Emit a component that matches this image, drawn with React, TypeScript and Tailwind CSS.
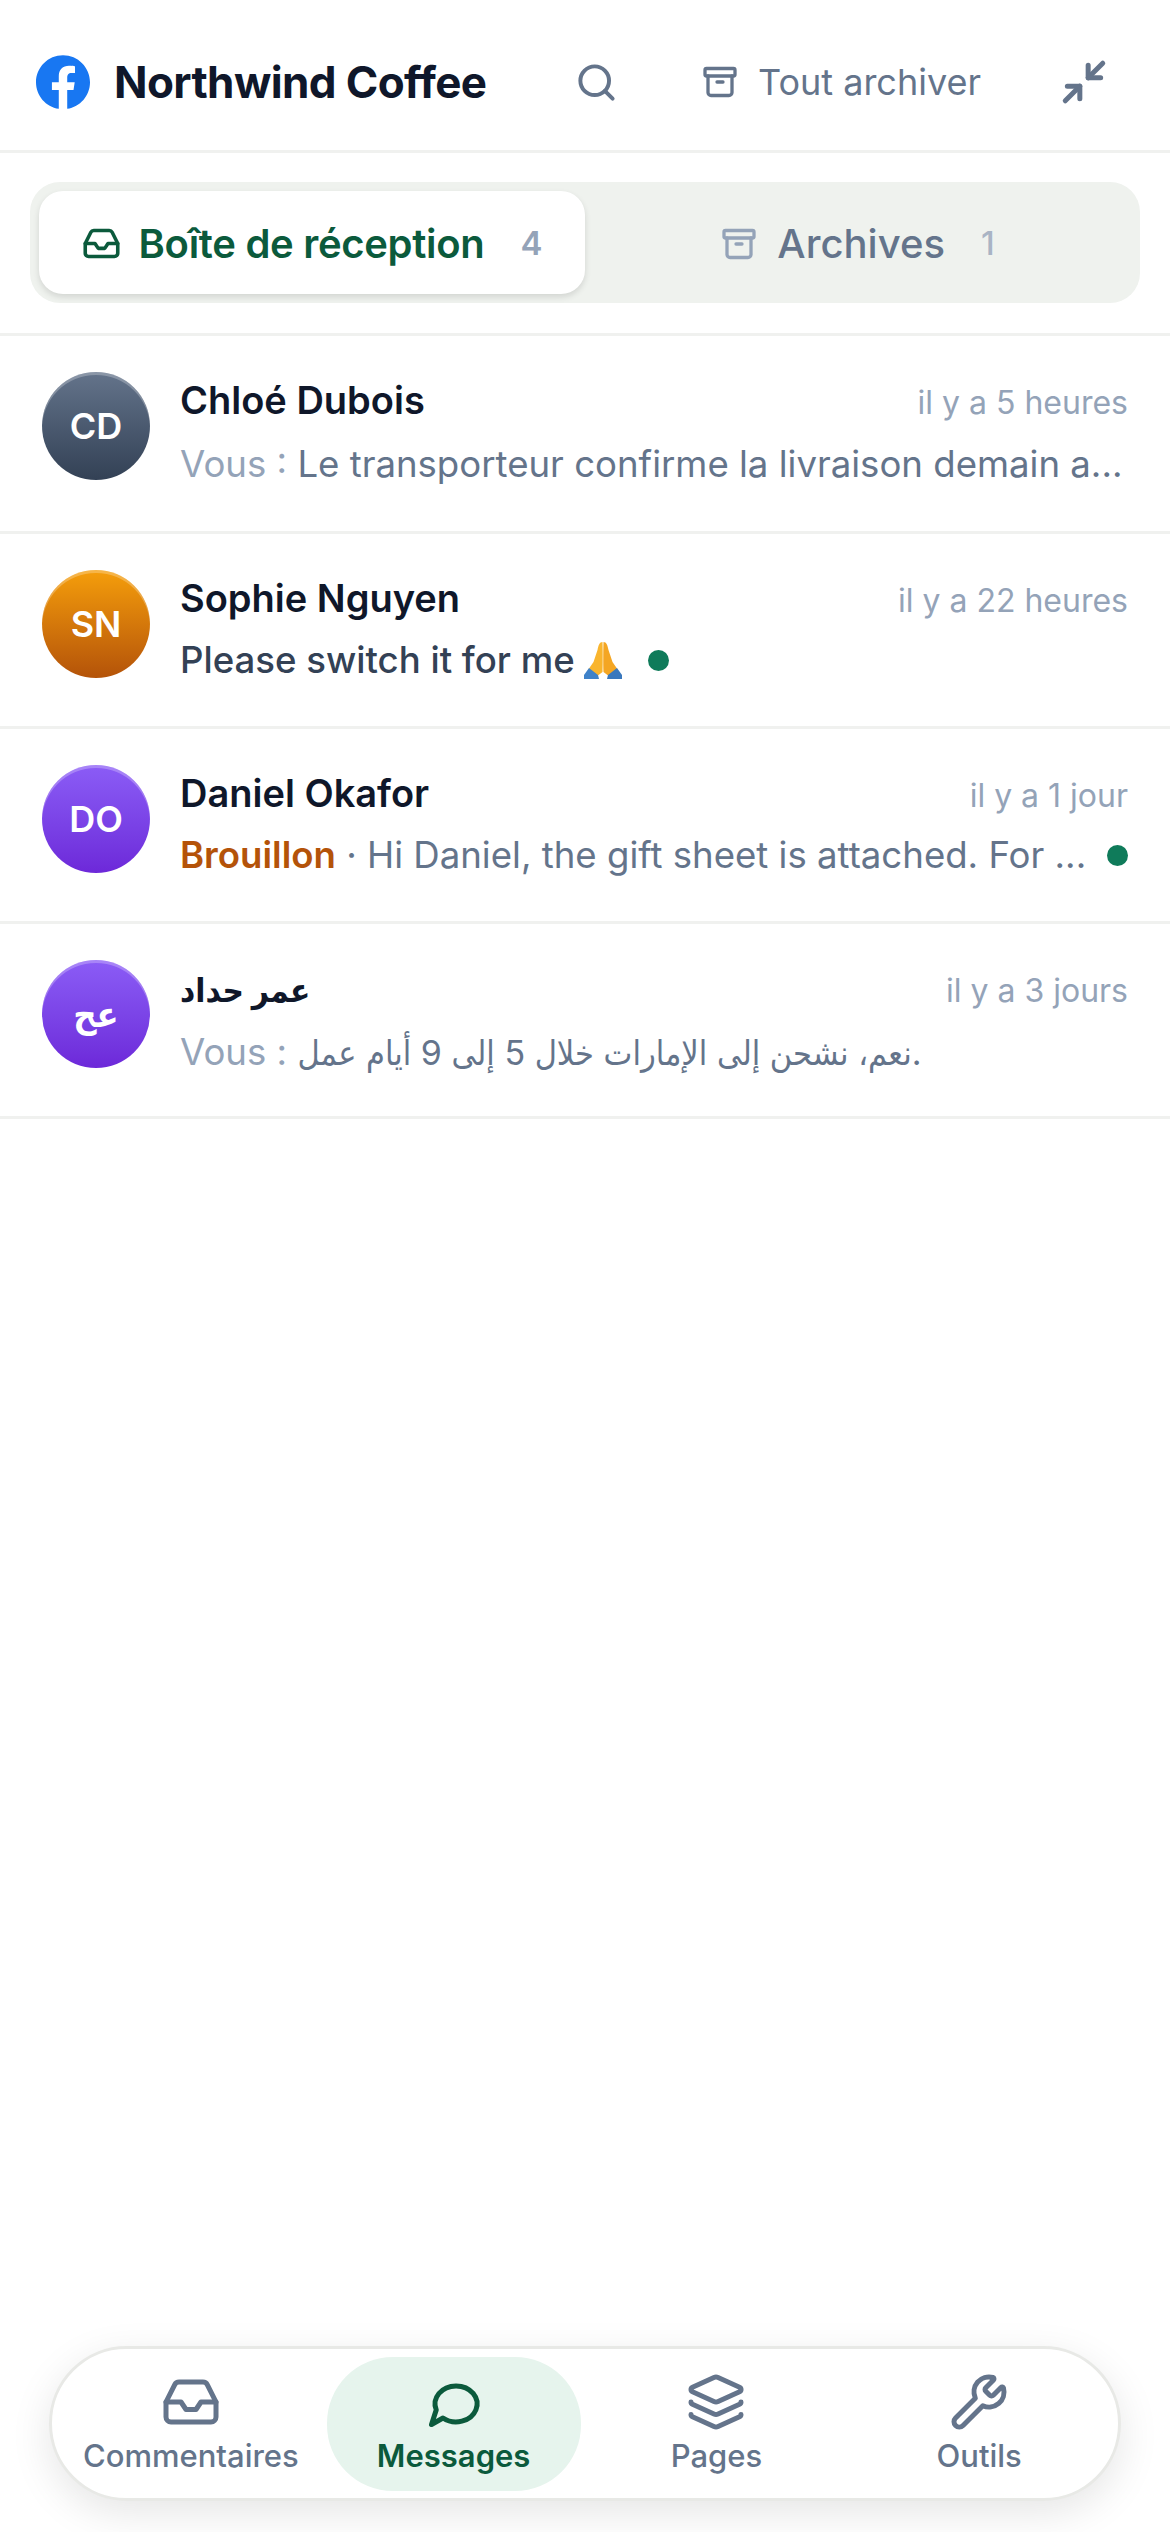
import { Archive, Inbox, Layers, Minimize2, Search, Wrench } from "lucide-react";

const font = "font-['Inter','DejaVu_Sans_Condensed','DejaVu_Sans',sans-serif]";

// Emoji mains jointes, aucune police emoji n'est installée
const PrayIcon = () => (
  <svg viewBox="0 0 38 38" className="ml-[9px] w-[38px] h-[38px] shrink-0">
    <path d="M18.5 1 C15.5 1 14.5 4 13.5 9 L9.5 21 L4 29 L12 36 L18.5 31 C18.8 25 18.8 10 18.5 1Z" fill="#f9b52e" />
    <path d="M19.5 1 C22.5 1 23.5 4 24.5 9 L28.5 21 L34 29 L26 36 L19.5 31 C19.2 25 19.2 10 19.5 1Z" fill="#f4a623" />
    <path d="M0 38 L0 34 L5 27 L14 34 L15 38Z" fill="#3f82c9" />
    <path d="M38 38 L38 34 L33 27 L24 34 L23 38Z" fill="#3a78bd" />
  </svg>
);

const FacebookLogo = () => (
  <svg viewBox="0 0 24 24" className="w-[54px] h-[54px] shrink-0">
    <circle cx="12" cy="12" r="11.5" fill="#ffffff" />
    <path
      fill="#1877f2"
      d="M24 12.073c0-6.627-5.373-12-12-12s-12 5.373-12 12c0 5.99 4.388 10.954 10.125 11.854v-8.385H7.078v-3.47h3.047V9.43c0-3.007 1.792-4.669 4.533-4.669 1.312 0 2.686.235 2.686.235v2.953H15.83c-1.491 0-1.956.925-1.956 1.874v2.25h3.328l-.532 3.47h-2.796v8.385C19.612 23.027 24 18.062 24 12.073z"
    />
  </svg>
);

// Bulle un peu aplatie avec la pointe en bas à gauche
const BubbleIcon = ({ size }: { size: number }) => (
  <svg width={size} height={size} viewBox="0 0 24 24" fill="none" stroke="currentColor" strokeWidth={2} strokeLinecap="round" strokeLinejoin="round">
    <path d="M7.6 18.4A8.4 7.2 0 1 0 4.9 15.15L3 21Z" />
  </svg>
);

const Dot = ({ className }: { className: string }) => (
  <span className={`w-[21px] h-[21px] rounded-full bg-[#0f7b5a] shrink-0 ${className}`} />
);

const conversations = [
  {
    initials: "CD",
    name: "Chloé Dubois",
    nameClass: "text-[38px] font-semibold",
    time: "il y a 5 heures",
    avatar: "from-[#64748b] to-[#334155]",
    previewClass: "mt-[8px]",
    preview: (
      <span className="text-[#64748b]">
        <span className="text-[#94a3b8]">Vous : </span>Le transporteur confirme la livraison demain a...
      </span>
    ),
  },
  {
    initials: "SN",
    name: "Sophie Nguyen",
    nameClass: "text-[38px] font-semibold",
    time: "il y a 22 heures",
    avatar: "from-[#f59e0b] to-[#b45309]",
    previewClass: "mt-[6px]",
    preview: (
      <>
        <span className="font-medium text-[#334155]">Please switch it for me</span>
        <PrayIcon />
        <Dot className="ml-[26px]" />
      </>
    ),
  },
  {
    initials: "DO",
    name: "Daniel Okafor",
    nameClass: "text-[38px] font-semibold",
    time: "il y a 1 jour",
    avatar: "from-[#8b5cf6] to-[#6d28d9]",
    previewClass: "mt-[6px] justify-between",
    preview: (
      <>
        <span className="text-[#64748b]">
          <span className="font-semibold text-[#b45309]">Brouillon</span> · Hi Daniel, the gift sheet is attached. For ...
        </span>
        <Dot className="ml-[20px]" />
      </>
    ),
  },
  {
    initials: "عح",
    name: "عمر حداد",
    nameClass: "text-[33px] leading-[60px] font-bold",
    time: "il y a 3 jours",
    avatar: "from-[#8b5cf6] to-[#6d28d9]",
    previewClass: "mt-[8px]",
    preview: (
      <span className="text-[#64748b]">
        <span className="text-[#94a3b8]">Vous : </span>
        <span className="text-[34px]">نعم، نشحن إلى الإمارات خلال 5 إلى 9 أيام عمل.</span>
      </span>
    ),
  },
];

const navItems = [
  { label: "Commentaires", icon: <Inbox size={60} strokeWidth={2} /> },
  { label: "Messages", icon: <BubbleIcon size={60} />, active: true },
  { label: "Pages", icon: <Layers size={60} strokeWidth={2} /> },
  { label: "Outils", icon: <Wrench size={60} strokeWidth={2} /> },
];

export default function App() {
  return (
    <div className={`${font} flex flex-col h-[2532px] bg-white`}>
      {/* En-tête */}
      <header className="flex items-center h-[153px] pt-[14px] pl-[36px] pr-[61px] border-b-[3px] border-[#f0f1ef]">
        <FacebookLogo />
        <h1 className="ml-[24px] text-[44px] font-bold tracking-[-0.6px] text-[#0f172a] whitespace-nowrap">Northwind Coffee</h1>
        <Search className="ml-auto text-[#64748b]" size={43} strokeWidth={2.2} />
        <div className="flex items-center ml-[84px] text-[#64748b]">
          <Archive size={36} strokeWidth={2.2} />
          <span className="ml-[20px] text-[36px] whitespace-nowrap">Tout archiver</span>
        </div>
        <Minimize2 className="ml-[78px] text-[#64748b]" size={50} strokeWidth={2.4} />
      </header>

      {/* Onglets */}
      <div className="border-b-[3px] border-[#f0f1ef] px-[30px] pt-[29px] pb-[30px]">
        <div className="flex h-[121px] p-[9px] rounded-[30px] bg-[#eff2ee]">
          <div className="flex items-center justify-center w-[546px] pt-[2px] rounded-[24px] bg-white shadow-[0_3px_6px_rgba(0,0,0,0.12)]">
            <Inbox className="text-[#0b5a3c]" size={39} strokeWidth={2.2} />
            <span className="ml-[18px] text-[40px] font-semibold tracking-[-0.3px] text-[#0b5a3c] whitespace-nowrap">Boîte de réception</span>
            <span className="ml-[36px] text-[33px] font-semibold text-[#94a3b8]">4</span>
          </div>
          <div className="flex flex-1 items-center justify-center pt-[2px]">
            <Archive className="text-[#94a3b8]" size={36} strokeWidth={2.2} />
            <span className="ml-[20px] text-[40px] font-medium text-[#64748b]">Archives</span>
            <span className="ml-[36px] text-[33px] font-medium text-[#a9b4c4]">1</span>
          </div>
        </div>
      </div>

      {/* Conversations */}
      <ul>
        {conversations.map((c) => (
          <li key={c.name} className="flex h-[195px] first:h-[198px] pt-[36px] pl-[42px] pr-[42px] border-b-[3px] border-[#f0f1ef]">
            <div
              className={`flex items-center justify-center w-[108px] h-[108px] shrink-0 rounded-full bg-gradient-to-b ${c.avatar} shadow-[inset_0_3px_0_rgba(255,255,255,0.25)] text-[36px] font-semibold text-white`}
            >
              {c.initials}
            </div>
            <div className="flex-1 min-w-0 ml-[30px]">
              <div className="flex items-baseline justify-between h-[57px]">
                <span className={`text-[#0f172a] whitespace-nowrap ${c.nameClass}`}>{c.name}</span>
                <span className="text-[32px] text-[#94a3b8] whitespace-nowrap">{c.time}</span>
              </div>
              <div className={`flex items-center text-[36.6px] whitespace-nowrap ${c.previewClass}`}>{c.preview}</div>
            </div>
          </li>
        ))}
      </ul>

      {/* Barre de navigation */}
      <nav className="flex gap-[9px] mt-auto mb-[31px] mx-[49px] h-[155px] pt-[8px] pb-[7px] px-[12px] rounded-[78px] bg-white border-[3px] border-[#e8e9e6] shadow-[0_12px_40px_rgba(0,0,0,0.1)]">
        {navItems.map((item) => (
          <div
            key={item.label}
            className={`flex flex-1 w-0 flex-col items-center pt-[15px] rounded-[66px] ${item.active ? "bg-[#e6f4ed] text-[#0b5a3c]" : "text-[#64748b]"}`}
          >
            {item.icon}
            <span className={`mt-[1px] text-[31px] whitespace-nowrap ${item.active ? "font-semibold" : "font-medium"}`}>{item.label}</span>
          </div>
        ))}
      </nav>
    </div>
  );
}
